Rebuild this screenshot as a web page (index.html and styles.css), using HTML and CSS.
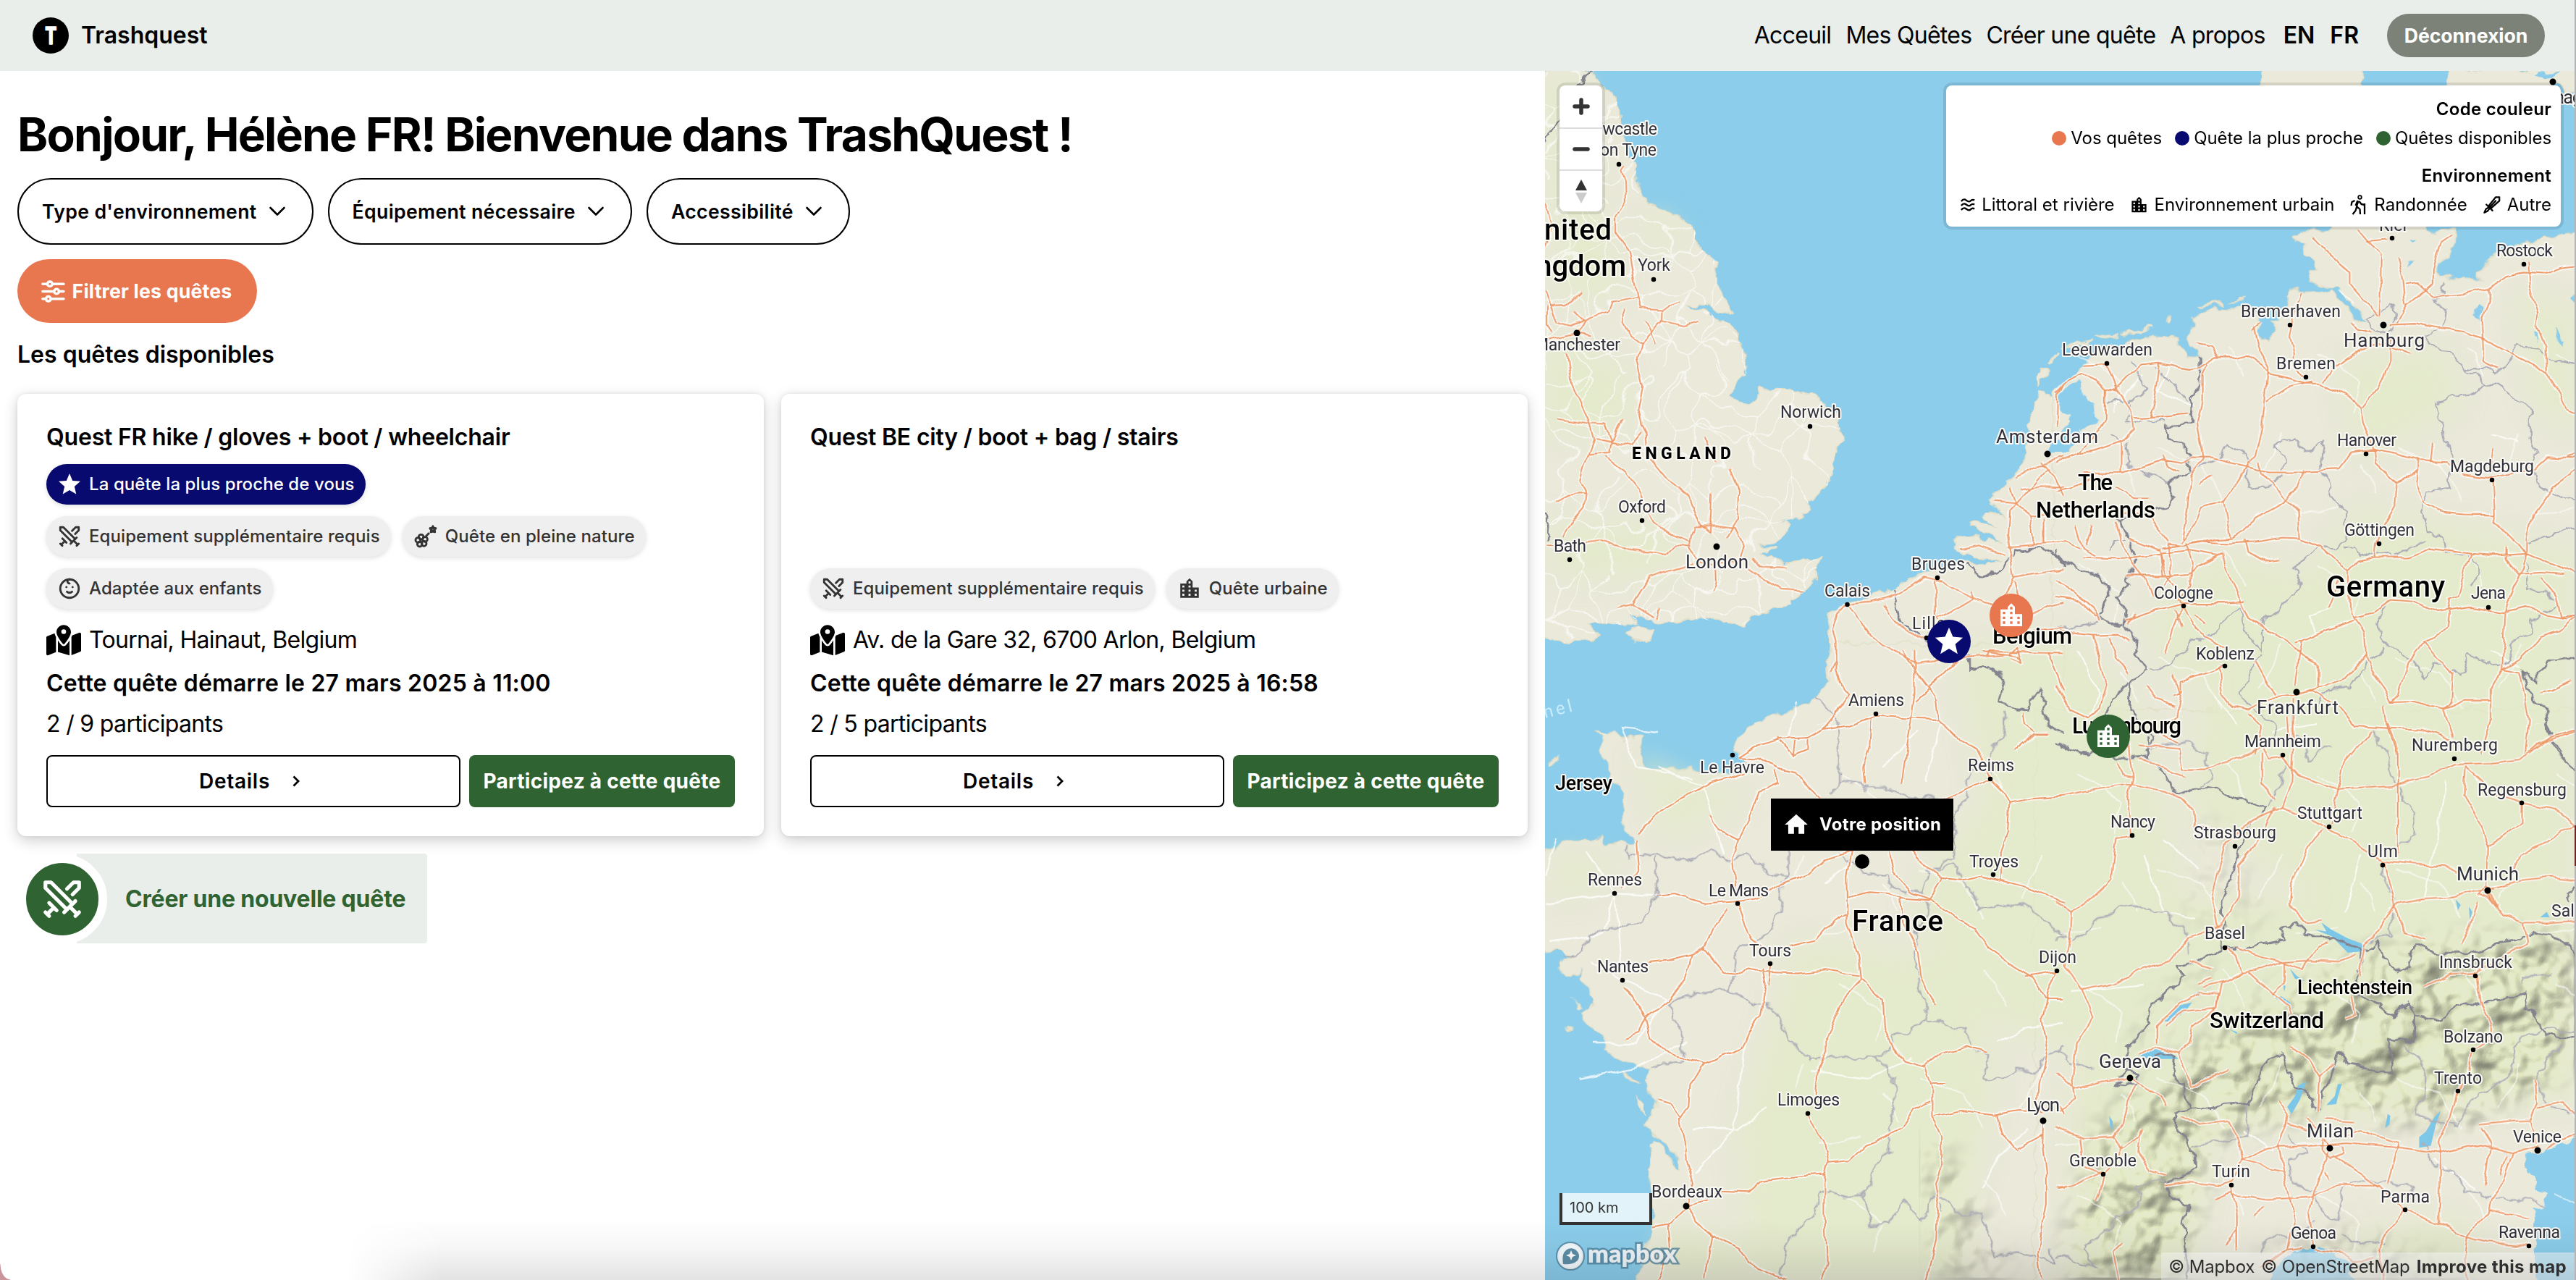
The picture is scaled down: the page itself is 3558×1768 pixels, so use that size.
FILE: index.html
```html
<!DOCTYPE html>
<html lang="fr">
<head>
<meta charset="utf-8">
<title>Trashquest</title>
<link rel="stylesheet" href="styles.css">
</head>
<body>
<svg class="sprite" aria-hidden="true">
  <symbol id="i-swords" viewBox="0 0 24 24"><g class="line"><path d="M14.5 17.5L3 6V3h3l11.5 11.5M13 19l6-6M16 16l4 4M19 21l2-2M14.5 6.5L18 3h3v3l-3.500 3.500M5 14l4 4M7 17l-3 3M3 19l2 2"/></g></symbol>
  <symbol id="i-sword" viewBox="0 0 24 24"><g class="line"><path d="M21.500 2.500h-4.500L9 12.500l3 3L21.500 7zM17 7l-6.500 7M5.500 11.500l7.500 7.500M7.500 15.500l-2.500 1.500-2 4.500 4-2 2-2.500"/></g></symbol>
  <symbol id="i-waves" viewBox="0 0 24 24"><g fill="none" stroke="currentColor" stroke-width="2.600"><path d="M2 6.500c3-3.500 5-3.500 7.500-1.500s5 2.500 6.500 1 3.500-2.500 6-1M2 13c3-3.500 5-3.500 7.500-1.500s5 2.500 6.500 1 3.500-2.500 6-1M2 19.500c3-3.500 5-3.500 7.500-1.500s5 2.500 6.500 1 3.500-2.500 6-1"/></g></symbol>
  <symbol id="i-city" viewBox="0 0 24 24"><path d="M15 11V5l-3-3-3 3v2H3v14h18V11h-6zm-8 8H5v-2h2v2zm0-4H5v-2h2v2zm0-4H5V9h2v2zm6 8h-2v-2h2v2zm0-4h-2v-2h2v2zm0-4h-2V9h2v2zm0-4h-2V5h2v2zm6 12h-2v-2h2v2zm0-4h-2v-2h2v2z"/></symbol>
  <symbol id="i-hike" viewBox="0 0 24 28"><circle cx="14" cy="3.500" r="2.300" fill="none" stroke="currentColor" stroke-width="1.800"/><path fill="none" stroke="currentColor" stroke-width="2.300" stroke-linejoin="round" d="M7 8l-4 2-1 5M12 8.500L9.500 16l4.500 4 .5 7M9.500 17L8 22l-4 5M13 9l3 4 5 1M11 8L8 15M20.500 12v15"/></symbol>
  <symbol id="i-flower" viewBox="0 0 24 24"><g class="line"><circle cx="7.500" cy="12.500" r="2.400"/><circle cx="4.500" cy="15.500" r="2.400"/><circle cx="6.200" cy="19.500" r="2.400"/><circle cx="10.300" cy="19" r="2.400"/><circle cx="11.300" cy="14.800" r="2.400"/><path d="M12.500 11.500L15 9"/><circle cx="19" cy="5" r=".6"/><path d="M19 2l.9 1.700 2 .3-1.200 1.600.3 2.100-2-.6-2 .6.3-2.100L16.100 4l2-.3z"/></g></symbol>
  <symbol id="i-kid" viewBox="0 0 24 24"><g class="line"><circle cx="12" cy="12" r="9"/><path d="M9 10.500h.01M15 10.500h.01M9.500 15a3.500 3.500 0 0 0 5 0M12 3a2 2 0 0 0 0 4"/></g></symbol>
  <symbol id="i-star" viewBox="0 0 24 24"><path d="M12 17.270L18.180 21l-1.640-7.030L22 9.240l-7.190-.61L12 2 9.190 8.630 2 9.240l5.460 4.730L5.820 21z"/></symbol>
  <symbol id="i-home" viewBox="0 0 24 24"><path d="M10 20v-6h4v6h5v-8h3L12 3 2 12h3v8z"/></symbol>
  <symbol id="i-place" viewBox="0 0 576 512"><path d="M408 120c0 54.600-73.100 151.900-105.200 192c-7.700 9.600-22 9.600-29.600 0C241.100 271.900 168 174.600 168 120C168 53.700 221.700 0 288 0s120 53.700 120 120zm8 80.400c3.500-6.900 6.700-13.800 9.600-20.600c.5-1.200 1-2.500 1.500-3.700l116-46.400C558.900 123.400 576 135 576 152V422.800c0 9.800-6 18.600-15.100 22.300L416 503V200.400zM137.600 138.300c2.400 14.100 7.200 28.300 12.800 41.500c2.900 6.800 6.100 13.700 9.600 20.600V451.800L32.900 502.700C17.100 509 0 497.400 0 480.400V209.600c0-9.800 6-18.600 15.100-22.300l122.600-49zM327.800 332c13.900-17.400 35.700-45.700 56.200-77V504.300L192 449.400V255c20.500 31.300 42.300 59.600 56.200 77c20.500 25.600 59.100 25.600 79.600 0zM288 152a40 40 0 1 0 0-80 40 40 0 1 0 0 80z"/></symbol>
  <symbol id="i-sliders" viewBox="0 0 32 32"><g fill="none" stroke="currentColor" stroke-width="3.400" stroke-linecap="round"><path d="M1.800 6h5.500M15.500 6h14.500M1.800 16h14.500M24.500 16h5.500M1.800 26h3.500M13.500 26h16.500"/><circle cx="11.500" cy="6" r="3.200"/><circle cx="20.500" cy="16" r="3.200"/><circle cx="9.500" cy="26" r="3.200"/></g></symbol>
  <symbol id="i-down" viewBox="0 0 32 32"><path d="M6.500 11l9.500 9.500L25.500 11" fill="none" stroke="currentColor" stroke-width="2.600" stroke-linecap="round" stroke-linejoin="round"/></symbol>
  <symbol id="i-right" viewBox="0 0 32 32"><path d="M12.500 9.500L19 16l-6.500 6.500" fill="none" stroke="currentColor" stroke-width="2.800"/></symbol>
</svg>

<header class="topbar">
  <a class="brand"><span class="brand-mark"><svg width="50" height="50" viewBox="0 0 50 50"><text x="17.200" y="36.500" textLength="16" lengthAdjust="spacingAndGlyphs">T</text></svg></span>Trashquest</a>
  <nav class="nav">
    <a>Acceuil</a><a>Mes Quêtes</a><a>Créer une quête</a><a>A propos</a>
    <span class="langs"><b>EN</b><b>FR</b></span>
    <button class="logout">Déconnexion</button>
  </nav>
</header>

<main class="layout">
  <section class="panel">
    <h1>Bonjour, Hélène FR! Bienvenue dans TrashQuest !</h1>
    <div class="filters">
      <button class="pill">Type d'environnement<svg><use href="#i-down"/></svg></button>
      <button class="pill">Équipement nécessaire<svg><use href="#i-down"/></svg></button>
      <button class="pill">Accessibilité<svg><use href="#i-down"/></svg></button>
    </div>
    <button class="apply"><svg><use href="#i-sliders"/></svg>Filtrer les quêtes</button>
    <h2>Les quêtes disponibles</h2>
    <div class="cards">
      <article class="card">
        <h3>Quest FR hike / gloves + boot / wheelchair</h3>
        <div class="chips">
          <div class="chip-row"><span class="chip nearest"><svg><use href="#i-star"/></svg>La quête la plus proche de vous</span></div>
          <div class="chip-row"><span class="chip"><svg><use href="#i-swords"/></svg>Equipement supplémentaire requis</span><span class="chip"><svg><use href="#i-flower"/></svg>Quête en pleine nature</span></div>
          <div class="chip-row"><span class="chip"><svg><use href="#i-kid"/></svg>Adaptée aux enfants</span></div>
        </div>
        <p class="place"><svg><use href="#i-place"/></svg>Tournai, Hainaut, Belgium</p>
        <p class="date">Cette quête démarre le 27 mars 2025 à 11:00</p>
        <p class="people">2 / 9 participants</p>
        <div class="actions"><button class="details">Details<svg><use href="#i-right"/></svg></button><button class="join">Participez à cette quête</button></div>
      </article>
      <article class="card">
        <h3 class="alt">Quest BE city / boot + bag / stairs</h3>
        <div class="chips">
          <div class="chip-row"><span class="chip"><svg><use href="#i-swords"/></svg>Equipement supplémentaire requis</span><span class="chip"><svg><use href="#i-city"/></svg>Quête urbaine</span></div>
        </div>
        <p class="place"><svg><use href="#i-place"/></svg>Av. de la Gare 32, 6700 Arlon, Belgium</p>
        <p class="date">Cette quête démarre le 27 mars 2025 à 16:58</p>
        <p class="people">2 / 5 participants</p>
        <div class="actions"><button class="details">Details<svg><use href="#i-right"/></svg></button><button class="join">Participez à cette quête</button></div>
      </article>
    </div>
    <a class="create"><span class="create-icon"><svg><use href="#i-swords"/></svg></span>Créer une nouvelle quête</a>
  </section>

  <section class="map">
    <svg class="canvas" viewBox="2134 98 1424 1670" preserveAspectRatio="none">
      <defs>
        <filter id="wobble" filterUnits="userSpaceOnUse" x="2134" y="98" width="1424" height="1670" color-interpolation-filters="sRGB"><feTurbulence type="fractalNoise" baseFrequency="0.045" numOctaves="3" seed="4"/><feDisplacementMap in="SourceGraphic" scale="17" xChannelSelector="R" yChannelSelector="G"/></filter>
        <filter id="wobble-soft" filterUnits="userSpaceOnUse" x="2134" y="98" width="1424" height="1670" color-interpolation-filters="sRGB"><feTurbulence type="fractalNoise" baseFrequency="0.035" numOctaves="2" seed="9"/><feDisplacementMap in="SourceGraphic" scale="10" xChannelSelector="R" yChannelSelector="G"/></filter>
        <filter id="wobble-mesh" filterUnits="userSpaceOnUse" x="2134" y="98" width="1424" height="1670" color-interpolation-filters="sRGB"><feTurbulence type="fractalNoise" baseFrequency="0.011" numOctaves="3" seed="21"/><feDisplacementMap in="SourceGraphic" scale="110" xChannelSelector="R" yChannelSelector="G"/></filter>
        <filter id="relief" filterUnits="userSpaceOnUse" x="2650" y="1050" width="908" height="718" color-interpolation-filters="sRGB"><feTurbulence type="fractalNoise" baseFrequency="0.017" numOctaves="3" seed="7"/><feColorMatrix values="0 0 0 0 0  0 0 0 0 0  0 0 0 0 0  1 0 0 0 0"/><feGaussianBlur stdDeviation="1.500"/><feDiffuseLighting surfaceScale="26" diffuseConstant="1.180" lighting-color="#fbfbe6"><feDistantLight azimuth="225" elevation="58"/></feDiffuseLighting></filter>
        <filter id="soft" x="-20%" y="-20%" width="140%" height="140%"><feGaussianBlur stdDeviation="18"/></filter>
        <mask id="alps" maskUnits="userSpaceOnUse" x="2600" y="1000" width="958" height="768"><g filter="url(#soft)" fill="#fff"><path d="M3558 1290L3400 1300 3290 1310 3220 1340 3150 1370 3090 1410 3040 1440 2990 1500 2950 1510 2900 1560 2880 1640 2860 1700 2860 1768H3010L3030 1690 3040 1640 3050 1580 3110 1560 3160 1540 3210 1535 3290 1545 3350 1550 3400 1560 3440 1530 3500 1500 3558 1470Z"/><path opacity=".5" d="M3050 1130L3030 1280 3060 1270 3080 1160ZM3100 1180L3120 1280 3090 1290ZM2940 1440L3040 1320 3060 1340 2960 1460ZM2640 1560L2700 1600 2780 1768 2680 1768ZM3100 1740L3250 1690 3420 1768H3250Z"/></g></mask>
        <pattern id="mesh" width="150" height="130" patternUnits="userSpaceOnUse"><path d="M0 20L40 35 75 10 110 40 150 20M40 35L30 80 0 95M30 80L70 100 110 80 150 95M110 40L110 80M75 10L80 0M70 100L80 130M75 10L70 60 30 80M70 60L110 80M0 60L30 80M150 60L110 80M20 130L30 80M130 130L110 80M110 40L125 0" fill="none" stroke="#fff" stroke-width="2.300"/></pattern>
        <pattern id="mesh-wide" width="330" height="290" patternUnits="userSpaceOnUse"><path d="M10 40L40 52 70 60 88 86 100 110M180 20L170 50 150 80M200 130L235 128 260 120M100 180L118 200 130 230M230 200L262 216 290 240 280 280M290 60L304 78 310 100" fill="none" stroke="#fff" stroke-width="2.200"/></pattern>
        <clipPath id="gb"><use href="#uk-path"/></clipPath>
        <g id="uk-shape"><path id="uk-path" transform="translate(2130 90) scale(.4592 .5357)" d="M9 14H150L160 35 190 62 218 75 232 110 234 150 250 195 265 215 262 235 282 260 283 290 300 330 318 358 345 365 385 378 420 397 450 412 465 440 480 475 505 495 530 505 512 518 518 550 545 600 574 643 535 635 495 615 470 625 428 620 450 632 495 632 530 655 565 680 585 695 610 740 618 775 615 795 590 815 560 853 590 865 620 878 640 865 645 845 655 835 700 835 760 838 820 855 860 880 890 905 895 940 898 970 880 1000 872 1040 862 1080 830 1110 800 1120 800 1135 793 1158 760 1165 715 1180 738 1185 735 1210 700 1230 650 1240 700 1245 663 1258 705 1270 730 1285 780 1275 834 1273 825 1300 828 1325 790 1355 742 1380 740 1395 700 1400 670 1410 630 1420 610 1445 550 1435 490 1430 430 1428 370 1440 330 1435 290 1415 275 1410 290 1440 250 1445 200 1440 140 1438 165 1470 150 1487 100 1475 65 1490 40 1478 -30 1465V14Z"/></g>
        <g id="c5-roads" transform="translate(2130 90) scale(.4592 .5357)">
          <path d="M9 355L30 420 9 470M248 262L238 275 248 300 250 352 222 395 222 430 262 480 280 560 288 595 298 628 358 632 380 618 418 607M9 583L25 622 70 620 115 585M25 622L45 662 90 672 140 650 200 635 210 610 288 597M9 708L60 700 104 690 125 660 95 635M75 745L90 825 115 870 140 918 155 965 140 1000 115 1070 130 1100 125 1140 95 1170 60 1215M104 690L148 697M15 622L15 665 30 690M245 628L245 665 265 695 297 715 325 690 357 660 358 632M310 662L340 717M357 660L430 672 468 660M297 715L285 760 305 830 290 890 300 930 315 955 318 1005 370 1060 440 1110 470 1180 505 1205M45 912L140 925 190 927 210 970 160 962M210 970L240 915M210 970L270 982 300 950M210 970L205 1000 140 1005M190 1010L250 1050 290 1095 310 1140 330 1180 385 1210 450 1232M42 1125L80 1108 128 1105M9 1240L60 1240 140 1228 175 1225 260 1250 350 1258 375 1262 400 1240 450 1245M487 957L520 1020M563 1040L592 1100 590 1170 555 1218M510 1100L505 1205M460 1190L530 1190 580 1195 605 1235 590 1280 520 1290 470 1280 445 1250 450 1215 460 1190M450 1285L390 1300 320 1320 270 1390 335 1425M235 1400L270 1390M350 1400L345 1430M520 1285L522 1330 510 1355M610 1290L660 1320 720 1350 780 1353M635 1270L660 1295 735 1297M870 1568L885 1535 885 1480 875 1450 890 1415 918 1390 985 1385 1050 1370 1110 1345 1150 1320 1200 1330 1250 1355 1330 1385 1370 1395 1420 1320 1400 1210 1405 1150 1470 1090 1520 1040M925 1395L975 1460 1020 1495 1090 1525 1125 1540M1180 1330L1182 1420 1225 1480M1030 1390L1060 1430 1125 1470 1160 1480M1400 1240L1480 1235 1568 1230M1420 1320L1480 1310 1568 1298M1190 1425L1260 1395 1300 1375 1290 1355M1260 1250L1310 1240 1390 1262M1425 1065L1480 1035 1568 1010M1410 1090L1425 1130 1470 1160 1568 1160M1360 1125L1425 1130M1420 1330L1440 1400 1450 1460 1568 1450M1470 1420L1520 1395 1568 1385M1125 1540L1250 1530 1400 1520 1425 1500 1440 1540 1410 1530M1330 1525L1340 1510 1568 1515M1440 1095L1500 1085 1568 1088M1500 1020L1540 1060 1568 1110M1470 1160L1480 1235M1510 1170L1510 1235M1548 930L1550 850 1568 830"/>
        </g>
        <g id="c6-roads" transform="translate(2840 300) scale(.4579 .4719)">
          <path d="M0 515L40 478 80 460 120 478 150 510 180 500 215 465 260 435 310 430 400 445 430 440 480 410 540 410 580 402 620 430 650 460 700 472 753 485 800 485 850 510 900 535 920 555 925 600 960 680 1010 690 1090 710 1180 715 1230 755 1300 765 1400 745 1440 735 1480 700 1568 705M82 432L152 428 180 500 225 560 235 620 200 655 110 685 60 690M150 510L150 590 110 650 60 690 0 720M310 430L300 500 285 570 290 587 400 578M235 590L290 587M425 370L470 380 490 410M455 430L440 460 440 540 425 600 445 710 405 760 395 860 380 940M595 320L600 340 610 380 640 440 630 530 620 620 600 700 580 720 505 830 525 940M620 305L590 330M735 220L720 270 705 350 718 400 715 440 750 470M775 480L700 495 635 540M870 420L830 450 810 480M870 420L920 385 990 370 1070 400M775 60L830 115 885 160 885 195 970 290M910 35L940 70 980 108 978 200 975 290M935 70L1000 65M1190 50L1160 70 1135 150 1135 195 1060 255 1030 310M1055 200L1090 195 1140 235 1230 225 1300 210 1360 170 1410 160 1480 165 1520 150 1568 145M1030 115L1045 180 1055 255M1010 315L1080 312 1150 325 1230 335 1290 355 1370 395 1440 430 1480 460 1520 520 1540 560 1568 572M1300 210L1305 250 1285 300 1290 380 1290 420 1330 440M1424 130L1430 200 1455 280 1450 320 1475 380 1478 460M1005 350L1005 420 970 500 925 555M890 305L910 330 950 340M80 750L200 750 320 710 380 720 410 705 470 705 530 720 580 730 640 745 700 745 760 745 850 740 890 690 965 680M195 660L195 750M320 700L340 730 370 745M610 715L620 750 680 810 730 860 735 940M750 740L730 790 690 830 600 880 570 920 530 940 470 945 380 960 340 955M505 830L440 850 420 900 375 950M320 970L430 950 520 955 600 950 680 938 735 940 800 965 840 1000 880 1035 910 1005 960 995 1060 995 1130 970 1250 985 1330 990 1420 985 1480 1010 1568 1045M960 680L965 720 1025 775 1020 850 990 900 965 960 962 995M1025 775L1090 745 1090 705M1135 665L1130 710M1315 680L1310 730M1320 770L1325 870 1320 890 1370 940 1420 985M1090 740L1085 780 1110 835 1170 865 1230 870 1325 872M1568 740L1500 790 1440 870 1420 940 1420 985 1410 1030 1380 1080 1355 1150 1350 1250 1345 1320 1310 1380 1310 1470 1280 1568M1568 690L1540 700M1355 970L1355 1000 1395 1045 1460 1040 1530 1045M1460 1055L1510 1110 1525 1170 1568 1165M1250 985L1230 1040 1210 1110 1180 1120 1190 1160 1185 1200 1110 1240 1060 1300 1030 1400 1010 1420M900 1170L960 1155 1010 1120 1080 1125 1150 1155 1250 1140 1350 1155 1420 1140 1480 1165 1540 1175 1568 1165M880 1035L880 1110 900 1170 930 1220 935 1290 960 1340 990 1380 1010 1420 1080 1418 1170 1440 1230 1415 1310 1415M850 1060L835 1110 820 1145M570 945L580 980 630 1008 675 1003M500 985L510 1030 550 1110 580 1170 640 1210 700 1245 740 1285 790 1310 790 1380 760 1390M900 1180L820 1205 740 1240 720 1245M740 1240L730 1290 720 1370M935 1280L870 1350 790 1380M0 1060L60 1100 110 1140 130 1180M220 940L310 975 330 1050 370 1110 384 1138M340 955L345 1050 320 1080M310 970L320 1050M390 950L410 1010 405 1080 370 1120M500 985L430 1020 400 1045 330 1050 210 1050M80 995L200 1000 310 985 400 975 490 990M180 890L195 950 230 1010 270 1060 290 1110M210 1180L300 1150 384 1130 500 1130 570 1125M384 1140L420 1200 450 1230 510 1260M384 1140L350 1200 330 1280M420 1160L450 1190M355 1150L375 1200M240 1160L215 1190M0 1210L110 1222 190 1220 220 1240M110 1222L130 1290 150 1370 130 1440 95 1465M160 1230L180 1290 220 1340M510 1315L430 1345 370 1360 370 1390 350 1400M490 1325L500 1390 530 1430 580 1440M350 1340L375 1420 370 1460 330 1480 310 1510 370 1540M270 1370L300 1410 360 1430M580 1440L640 1410 726 1400 770 1385M600 1300L640 1370 660 1400M715 1410L715 1568M700 1460L705 1530M770 1385L850 1430 900 1490 990 1495 1100 1500 1200 1530M990 1430L1000 1495 1025 1568M1110 1240L1160 1300 1195 1340 1190 1420 1170 1440 1200 1520M0 800L50 790 110 760M0 1110L70 1120 120 1170M60 900L80 970 120 990M20 950L70 970M110 900L90 960M580 1450L620 1490 600 1568M1345 1320L1395 1330 1410 1390 1425 1470 1415 1568M1345 1320L1400 1290 1460 1230 1520 1210 1568 1170M0 1370L40 1440 95 1465M180 790L240 825 280 825M200 860L290 880 340 950M470 755L430 780M1430 1568L1500 1520 1568 1500M1460 1390L1500 1380 1550 1357"/>
        </g>
        <g id="c7-roads" transform="translate(2130 900) scale(.4592 .5536)">
          <path d="M885 0L885 50 905 95 920 110 870 170 845 195 800 215 720 218 640 235 590 262M845 195L920 185 1005 160 1100 165 1190 168 1240 210 1310 245 1348 315 1390 350 1405 375 1400 450 1380 500 1378 570M1085 0L1125 50 1180 110 1190 168M1250 20L1190 70 1125 120M1120 0L1120 100 1110 170 1095 250 1080 330M990 165L985 230 965 290 970 330M1348 318L1290 340 1215 365 1130 385M1405 375L1480 365 1568 360M590 262L650 265 710 290 760 300 790 330 835 365M710 215L755 260 800 245M760 220L755 260M800 220L800 245M700 295L710 330 650 350 620 420 590 470 570 520 580 590M470 345L500 330 570 315 620 300M470 345L410 370 370 390 310 430 290 460M505 410L530 445 590 470M283 475L290 550 240 590M350 610L400 605 490 628 580 622 640 615 720 580 800 555 850 520 930 498M589 628L610 680 630 715 660 735M560 640L520 680 490 740 450 755 380 770 320 775M450 755L430 820 380 870 310 915 290 950 250 962M490 740L550 800 600 805 620 790 687 800 770 803 850 795 955 808M660 790L670 830 655 910 620 950 600 990 540 1010 490 1030 440 1015 380 1005 325 965 310 915 275 860 250 840M687 778L680 830M750 735L820 720 850 690 920 655M930 498L915 560 918 680 950 750 960 815 910 860 890 900 850 970 850 1000 830 1040 820 1120M1045 500L1055 550 1110 600 1170 620 1240 665 1300 690 1340 740 1400 775 1470 810 1515 865 1568 865M920 615L980 602 1040 605 1090 615 1160 620 1200 565 1260 570 1320 560 1378 572 1460 590 1568 625M1105 490L1150 535 1200 565M1080 610L1085 680 1130 750 1140 810 1160 850 1185 880M960 815L1025 870 1030 940 1060 990 1090 1020 1150 1035 1170 1090 1170 1160 1200 1210 1200 1280 1180 1330 1190 1370 1185 1470 1155 1568M1145 1035L1200 1000 1280 985 1340 1000M1170 1080L1215 1080M800 1152L825 1195 850 1230 862 1275 850 1310 850 1400 855 1530 840 1568M862 1275L920 1270 970 1230 1030 1210 1085 1185 1120 1140 1165 1120M1175 1160L1260 1145 1360 1155 1440 1145 1507 1150M1365 1155L1380 1200 1430 1245M1430 1240L1507 1205M540 1345L620 1348 660 1320 760 1310 850 1305M490 1030L445 1080 440 1130 415 1165 430 1220 435 1270 455 1330 434 1384M350 1120L390 1130 420 1165M434 1384L380 1430 330 1437M434 1384L460 1420 510 1455 590 1490 620 1525 730 1568M380 1430L385 1490 350 1568M510 1455L500 1510 490 1568M434 1384L500 1372M1548 796L1520 850 1505 920 1520 990 1495 1080 1490 1140M1507 1171L1505 1230 1515 1300 1515 1380 1500 1440 1490 1500 1500 1568M1320 0L1420 10 1440 20M1420 250L1480 205 1520 205M1480 200L1450 180 1445 150M1568 100L1545 50 1520 0M1450 810L1548 796M1568 1150L1540 1120M1550 1340L1568 1338"/>
        </g>
        <g id="c8-roads" transform="translate(2840 1000) scale(.4579 .4898)">
          <path d="M0 205L110 185 225 170 330 190 380 210 410 240 415 290 490 300 510 295M215 0L220 80 230 150 215 210 225 314 180 320 165 440 110 490 45 530 0 500M180 110L200 145 230 150M45 530L40 620 25 680 75 750 110 825 60 900 50 1000 60 1060 0 1090M75 750L180 730 260 690 340 670 400 600 470 580 500 570M245 60L370 70 380 130 450 130 500 110 560 95 620 60M250 90L340 135 390 150M610 40L640 100 684 95 730 145 850 185 1010 175 1120 150 1202 115 1310 110 1400 100 1450 60 1568 20M620 80L620 170 660 210M715 80L710 160 680 235 600 270 510 330 470 480 490 580M660 235L600 340 550 400 550 480 500 570M680 235L760 260 820 300 910 340 985 385 1080 395 1170 400 1240 430M850 185L830 280M850 185L870 110 950 20M1000 0L1030 80 1030 180 1030 370M800 300L760 350 710 450 705 510 760 560 800 555M990 390L1020 510 1100 495 1180 490 1260 470 1301 469M1020 510L1050 590 1115 610M1020 510L960 600 930 620 915 710M1235 120L1230 200 1280 280 1305 350 1301 469 1340 460 1400 440 1490 432 1568 440M1235 120L1330 200 1405 223 1405 280 1305 345M1405 223L1500 240 1568 290M1568 280L1480 330 1400 370 1370 430M1301 480L1350 540 1410 560 1490 560 1568 555M1270 500L1250 570 1220 620M1310 480L1330 510 1301 490 1270 480 1301 455 1325 470M1410 560L1420 620 1340 660 1270 700 1190 705 1110 740M1270 710L1280 780 1310 850 1310 890 1258 919 1245 990 1212 1035 1190 1110 1150 1180 1160 1210M508 631L545 650 560 700 620 690 680 670 740 690 790 630 820 620M545 630L600 650 680 670 760 665 850 670 900 650M560 700L500 730 485 800 380 810 330 850M580 700L650 760 700 800 710 820M690 670L690 730 650 765M445 740L510 725M400 670L470 690M430 730L470 715M485 800L490 760 430 755M485 800L410 860 400 900 365 930 300 910 250 935M305 900L305 850 370 790 430 760M365 930L385 980 410 1025 440 1005 520 975M710 910L760 945 795 995 790 1090M795 995L840 955M870 830L900 820 890 770M222 998L140 1010 100 1020 60 1030 0 980M222 998L280 1030 320 1050 335 1075M240 1020L215 1060 200 1130 170 1165 80 1170 0 1140M170 1165L195 1200 250 1165 260 1145M142 1270L195 1220 195 1190M142 1270L80 1240 70 1170M250 1170L245 1210 280 1255 330 1270M142 1270L130 1320 120 1340M0 1310L50 1300 140 1260M330 1300L400 1290 500 1300 530 1290 560 1230 640 1195 760 1190 826 1185M380 1105L430 1130 520 1120 550 1170 560 1230 640 1250 690 1260M530 1310L545 1380 545 1480M530 1320L480 1340M530 1325L640 1340 760 1335 850 1300 970 1300 1050 1370 1160 1410 1240 1445 1300 1460 1430 1470M670 1060L700 1100 695 1140 670 1190 690 1280 720 1400 700 1480M750 1110L790 1150 826 1185 870 1180 1000 1190 1160 1210 1280 1185 1380 1210 1453 1190M840 1220L970 1305M826 1200L780 1310 760 1380 775 1470M700 1130L760 1150M870 1160L920 1145 1030 1180 1000 1300M1160 1210L1155 1410M1280 1140L1310 1185 1300 1260 1290 1300M1275 1130L1380 1120 1430 1118M1445 1000L1450 1070 1430 1118M1450 1085L1530 1070 1568 1110M1430 1120L1445 1180M1380 1210L1350 1290 1310 1340 1300 1380 1240 1445 1230 1510 1240 1568M1360 1220L1340 1270M1305 1370L1430 1395M1053 1370L1000 1430 970 1480 985 1568M600 1390L630 1360M545 1430L510 1470M780 1480L850 1490 900 1520 960 1500M640 1520L700 1480 740 1475M200 1465L175 1490 190 1568M860 1190L870 1210 830 1225 800 1200 805 1170M810 1260L820 1280M1480 1200L1568 1150M700 1480L610 1530M810 1115L900 1120"/>
        </g>
      </defs>
      <rect x="2134" y="98" width="1424" height="1670" fill="#8bcdeb"/>
      <g filter="url(#wobble)">
        <g fill="#eae9da" stroke="#e2dec8" stroke-width="1.500">
          <use href="#uk-shape"/>
          <g transform="translate(2130 90) scale(.4592 .5357)">
            <path d="M243 1468L290 1445 333 1462 320 1480 280 1490ZM1485 820L1505 780 1518 780 1515 805ZM1515 760L1550 740 1555 744 1520 765Z"/>
            <path d="M860 1590L862 1450 865 1415 895 1395 920 1385 1000 1365 1060 1350 1110 1325 1165 1305 1215 1290 1265 1278 1300 1292 1385 1278 1300 1268 1240 1245 1235 1228 1265 1220 1310 1215 1345 1228 1385 1240 1340 1205 1285 1190 1290 1178 1340 1180 1375 1195 1320 1160 1345 1150 1390 1170 1350 1128 1338 1120 1370 1105 1410 1070 1440 1025 1465 960 1470 900 1485 840 1510 855 1540 860 1568 835V1590Z"/>
          </g>
          <g transform="translate(2840 300) scale(.4579 .4719)">
            <path d="M-10 1590V520L40 480 70 460 80 430 110 400 170 380 250 360 300 350 360 348 365 370 380 390 400 410 435 412 435 400 408 385 395 355 400 325 415 320 410 300 430 285 490 270 555 265 600 280 620 310 605 335 620 360 645 360 655 320 650 300 690 290 700 240 705 215 725 208 745 225 780 225 830 212 880 262 900 300 940 310 890 245 855 208 800 200 760 190 765 155 785 150 775 125 750 110 755 75 715 70 712 55 735 38 830 30V0H1110L1115 40 1150 45 1205 30 1200 105 1145 140 1150 165 1210 180 1240 175 1280 190 1265 165 1290 140 1340 95 1400 75 1470 60 1520 45 1590 35V1590ZM10 385L60 365 110 357V363L60 375ZM120 350L190 342V348L125 356ZM200 343L290 320 292 326 205 350ZM325 300L345 296 335 308ZM425 262L500 250 505 255 430 266ZM520 245L575 240 570 246Z"/>
          </g>
          <g transform="translate(2130 900) scale(.4592 .5536)">
            <path d="M860 -20L862 55 870 72 840 105 780 130 700 160 640 180 590 210 575 245 600 265 610 290 570 305 480 300 400 290 330 290 300 265 295 245 303 215 290 208 240 220 220 210 165 203 185 220 180 255 205 300 235 345 245 380 240 430 265 455 270 480 230 475 190 478 185 462 150 470 110 475 75 475 40 490 -9 500V748L55 745 90 760 55 775 50 790 80 810 120 800 130 835 155 870 125 900 140 930 185 960 195 995 240 1020 280 1035 330 1040 310 1070 325 1095 345 1120 335 1150 305 1185 345 1205 400 1250 412 1290 400 1290 385 1260 340 1220 325 1230 320 1330 330 1400 330 1440 310 1480 285 1590H1568V-20ZM22 270L50 258 45 270 25 277ZM245 1055L290 1070 292 1076 250 1062ZM275 1108L300 1120 312 1160 285 1130ZM95 870L120 885 105 890ZM76 940L92 942 84 948Z"/>
          </g>
          <path d="M2810 980H3590V1790H2810ZM3127 90H3262V140H3120ZM3385 90L3420 100 3450 92 3480 100 3500 90H3570V128H3545L3530 112 3510 125H3380Z"/>
        </g>
      </g>
      <g fill="#e2eac6" opacity=".7" filter="url(#soft)">
        <path d="M2134 110H2190L2210 300 2240 400 2160 420ZM2270 290L2310 305 2325 325 2280 340ZM2134 470L2240 500 2260 580 2180 600 2134 600ZM2140 720L2300 730 2320 790 2160 800ZM3230 500L3380 480 3400 560 3260 640ZM3060 760L3220 800 3250 960 3000 940 2960 860ZM3260 700L3558 760V1240L3220 1260 3020 1120 3040 960ZM2700 900L2860 880 2960 980 3020 1240 2900 1460 2700 1400 2640 1240 2740 1100ZM2480 1300L2700 1320 2760 1480 2700 1768H2420L2400 1560ZM2150 1180L2240 1190 2180 1240 2150 1240ZM2260 1040L2340 1080 2420 1100 2300 1160ZM2300 1690L2420 1720 2400 1768H2290ZM3220 1720L3400 1680 3440 1768ZM3480 400L3558 430V600L3500 560ZM3000 1240L3558 1240V1520L3300 1540 3060 1560 3020 1768H2860V1480Z"/>
      </g>
      <g filter="url(#wobble)">
        <g fill="#8bcdeb">
          <path transform="translate(2840 1000) scale(.4579 .4898)" d="M630 1590L680 1520 730 1482 780 1474 830 1487 880 1530 910 1590ZM1600 1150L1480 1200 1420 1215 1410 1240 1425 1270 1445 1280 1450 1310 1490 1330 1470 1365 1435 1375 1438 1420 1440 1470 1450 1520 1460 1590H1600Z"/>
          <path transform="translate(2840 300) scale(.4579 .4719)" d="M5 515L75 470 80 520 110 545 115 600 75 625 40 600 45 575 10 565ZM-15 665L60 595 75 640 30 690 -15 690ZM1275 250L1285 260 1280 310 1270 290ZM1055 120L1075 125 1065 138ZM1500 330L1535 360 1530 375 1505 350ZM1445 330L1452 340 1440 360ZM1568 210L1550 230 1568 245ZM1065 65L1085 68 1075 75Z"/>
          <path d="M3535 200H3558V300H3540ZM3505 98L3535 100 3530 106 3500 104ZM3540 130L3558 140V200H3538Z"/>
        </g>
      </g>
      <g class="relief" mask="url(#alps)"><rect x="2650" y="1050" width="908" height="718" filter="url(#relief)"/></g>
      <g clip-path="url(#gb)" opacity=".6"><rect x="2060" y="30" width="560" height="900" fill="url(#mesh)" filter="url(#wobble-mesh)"/></g>
      <g class="minor" filter="url(#wobble-soft)">
        <path d="M2134 1248L2230 1234 2330 1240M2230 1234L2215 1290 2140 1300M2230 1234L2190 1175M2230 1234L2240 1340M2290 1010L2240 1005 2260 1060 2340 1075M2350 1085L2380 1180M2350 1085L2290 1060M2241 1354L2200 1330M2241 1354L2300 1380 2260 1440 2200 1440M2410 1440L2395 1560 2340 1620M2180 1490L2260 1475 2330 1440M2500 1480L2580 1490 2640 1460M2340 1560L2400 1560 2440 1530M2470 1020L2480 970M2680 1000L2660 1080M2600 1060L2650 1010M2760 1440L2800 1420 2850 1415M2800 1560L2760 1600 2740 1640M2960 1180L2990 1260 3030 1270M2990 1160L3040 1200M3200 1150L3160 1240M3260 1180L3240 1260M3380 1080L3350 1240M2870 900L2900 960 2880 1000M3000 500L2980 540 3030 560M2920 560L2960 520M2860 1370L2960 1360M3480 920L3440 900M3100 1560L3140 1590M3360 1600L3420 1640M3060 960L3090 1000M3140 1010L3200 1000M2560 1190L2520 1220M2150 1160L2134 1210M3230 400L3250 420M3440 600L3480 610M3200 880L3190 850 3220 840"/>
        <rect x="2480" y="1000" width="1078" height="740" fill="url(#mesh-wide)" stroke="none" opacity=".7"/>
        <rect x="2860" y="480" width="698" height="500" fill="url(#mesh-wide)" stroke="none" opacity=".7"/>
      </g>
      <g class="lakes" transform="translate(2840 1000) scale(.4579 .4898)">
        <path d="M780 580L830 598 880 645 935 640 925 620 880 605 830 580 800 560 815 585ZM325 838L365 795 410 785 390 810 345 840ZM250 935L300 915 350 930 370 945 320 945 270 942ZM415 760L435 755 430 770ZM1205 495L1220 510 1212 525ZM1245 515L1255 530 1248 558ZM1460 545L1480 530 1488 545ZM660 772L680 768 705 785 712 805 690 788ZM705 690L725 710 750 725 720 718ZM697 1080L720 1050 730 1020 755 1008 735 1060 710 1100ZM815 1075L840 1050 850 1015 862 1015 850 1050 845 1072ZM992 1140L1000 1100 1008 1105 1005 1130ZM1160 1090L1145 1130 1130 1190 1095 1195 1095 1165 1115 1150 1140 1110ZM160 1105L170 1120 172 1145 163 1135ZM685 735L692 740 688 755ZM525 862L545 868 545 875Z"/>
      </g>
      <g class="region" filter="url(#wobble)">
        <path transform="translate(2840 300) scale(.4579 .4719)" d="M1170 185L1165 230 1145 240 1175 270 1170 315 1110 350 1130 385 1190 390 1230 440 1300 485 1320 490 1400 540 1430 560 1430 640 1450 680 1435 720 1450 790 1480 800 1530 820 1568 830M1230 440L1330 450 1400 380 1450 385 1500 420 1568 430M1300 485L1260 520 1200 525 1145 545 1160 600 1175 660 1195 720 1180 790 1110 800 1105 860 1120 920 1170 930 1175 975 1250 990 1280 1040 1250 1080M940 300L970 285 1020 260 1025 300 1000 340 960 335ZM400 740L440 720 490 700 515 660 560 690 580 720 575 760 590 795 640 785 685 750 685 700 655 680 720 645 750 690 810 655 790 750 820 780 840 840 875 860 870 940 840 980 790 965 750 1000 710 1030 740 1070 690 1130 620 1180 620 1270 580 1230 550 1145 500 1190 460 1230 400 1250 350 1310 280 1320M870 970L905 960 920 1000 960 990 1060 980 1110 940M1000 1130L970 1180 975 1230 1010 1260 1070 1290 1110 1350 1140 1310 1190 1320 1220 1340 1240 1280 1320 1310 1370 1300 1370 1250 1440 1220 1440 1180 1510 1130 1480 1100 1420 1090 1420 950 1568 910M940 1300L970 1290 1000 1265M935 1300L890 1380 800 1385 790 1420M620 1280L580 1340 550 1400 600 1440 660 1480 665 1540M230 420L250 470 275 500 220 540 150 545M300 440L350 480 400 540M220 545L220 600 330 600M210 660L215 730 340 780M160 640L200 660M170 970L170 950 200 940M0 1200L60 1200 130 1190"/>
        <path transform="translate(2130 900) scale(.4592 .5536)" d="M825 110L895 180 895 320 870 360M895 320L980 340 1030 340 1080 355 1180 365 1175 400M1390 150L1385 210 1350 240 1350 300 1280 290 1280 360 1240 400 1240 510 1160 545 1140 600 1050 590 1040 560 960 555 900 500M245 480L260 515 340 505 440 520 510 495 550 520 620 505 680 550 740 560 740 500M340 510L345 610 300 680 230 680 140 710 120 755 65 760M740 560L720 590 715 650 670 715 590 735 570 840 640 885 680 880 750 970 800 1020 880 1010 1000 1010 1060 1060 1060 1120 1040 1180 1050 1250 1020 1260 970 1350 930 1360 840 1345 820 1400 740 1470 720 1568M570 840L440 860 380 880 420 950 430 1020 330 1035M1160 545L1240 530 1320 640 1460 630 1520 680 1568 710M1140 600L1165 640 1120 700 1130 800 1160 920 1060 960 1060 990 1005 1010M1160 920L1270 940 1310 1000 1340 1010 1330 1060 1380 1070 1420 1045 1480 1050 1520 1000 1568 990M970 1350L985 1430 1050 1425 1090 1370 1140 1420 1170 1360 1220 1370 1270 1410 1320 1400 1360 1510 1430 1500 1480 1510 1540 1520 1530 1490M1200 1400L1180 1370"/>
        <path transform="translate(2840 1000) scale(.4579 .4898)" d="M0 600L50 610 120 560 220 505 330 530 395 590 400 650M280 75L390 45 450 80 465 150 430 180M950 20L1000 80 1015 150 1050 220 1080 250 1080 310 1040 340 1040 370M985 400L1015 500 1010 590 930 620M690 100L680 180 640 235M700 0L740 50 760 100 830 60M1500 700L1410 710 1410 740M1568 870L1480 860 1400 890 1370 990 1280 1040 1210 1130 1150 1120 1085 1100 1110 1040 1110 960 1050 910M1530 900L1450 980 1470 1060 1530 1090 1568 1100M0 920L60 960 100 980M570 1070L575 1160 420 1190M700 1160L750 1210 700 1230 710 1300 780 1320 800 1370 850 1400 870 1300 930 1290 1000 1290 1120 1330M1110 1190L1120 1220 1200 1270 1240 1320 1330 1340 1440 1340 1470 1365M860 1440L920 1470 990 1460M330 1290L240 1300 260 1350 190 1390 130 1440 80 1480 120 1530 0 1500M780 1400L740 1440 640 1450 620 1490"/>
      </g>
      <g class="country" filter="url(#wobble)">
        <path transform="translate(2130 90) scale(.4592 .5357)" d="M150 14L120 45 90 60M60 145L40 155 9 200M9 1150L20 1170 15 1220M1275 1290L1320 1320 1375 1300 1400 1275 1420 1250 1500 1245 1550 1260 1568 1295M1055 1352L1070 1420 1110 1460 1160 1480 1200 1500 1275 1520 1280 1568"/>
        <path transform="translate(2840 300) scale(.4579 .4719)" d="M435 412L437 460 410 530 405 605 335 610 335 655 380 665 405 700 395 740 335 780 355 820 320 850 190 885 215 930 235 1000 210 1060 225 1080 180 1110 210 1150 205 1200 245 1240 240 1280 270 1325 225 1370 220 1440 265 1500 290 1530 265 1568M0 970L20 1010 110 1040 165 1080 130 1180 200 1195M220 1370L170 1400 150 1460 130 1480M1568 1290L1490 1300 1450 1330 1450 1370 1410 1330 1420 1380 1480 1440 1490 1500 1520 1568"/>
        <path transform="translate(2130 900) scale(.4592 .5536)" d="M1280 0V45L1340 40 1390 70 1375 130 1460 145 1500 90 1515 180 1568 200"/>
        <path transform="translate(2840 1000) scale(.4579 .4898)" d="M0 50L80 80 200 95 265 90 300 110 350 180 400 190 480 180 540 210 630 235 580 300 550 350 530 440 505 500 500 640 430 670 370 680 390 710 290 800 280 850 210 910 215 960M270 90L270 40M520 635L600 625 690 610 680 580 720 565 760 600 840 600 890 630 940 640 960 620 1010 680 1030 705 1060 690 1080 625 1170 650 1250 650 1340 610 1420 600 1440 590 1530 610 1568 650M920 640L915 700 900 760 970 790 1020 820 1060 790 1085 820 1080 900 1000 890 1015 990 960 970 880 960 860 920 830 990 790 1060 800 1090 770 1080 760 1030 720 1020 680 930 640 940 610 1000 580 1070 480 1080 410 1085 380 1030 350 980 355 935 290 935M1085 820L1170 840 1210 790 1290 790 1420 760 1420 800 1480 880 1568 890M410 1085L355 1100 360 1150 420 1200 420 1260 330 1290 340 1330 400 1360 380 1400 400 1568M185 1010L215 980 250 990 230 1015ZM1568 460L1540 480 1550 500M1480 0L1510 80 1568 130"/>
      </g>
      <g filter="url(#wobble-soft)">
        <g class="casing"><use href="#c5-roads"/><use href="#c6-roads"/><use href="#c7-roads"/><use href="#c8-roads"/></g>
        <g class="major"><use href="#c5-roads"/><use href="#c6-roads"/><use href="#c7-roads"/><use href="#c8-roads"/></g>
      </g>
      <g class="dots">
        <path class="town" d="M2236 227h0M2284 386h0M2500 589h0M2268 719h0M2168 773h0M2551.500 835h0M2676 798h0M2661 881h0M3304 329h0M3486 365h0M3163 449h0M2910 502h0M3185 521h0M3268 627h0M3442 663h0M3286 751h0M3016 837h0M3437 839h0M3073 920h0M2591 986h0M2393 1043h0M2749 1076h0M2753 1208h0M2230 1234h0M2400 1248h0M2445 1331h0M2241 1354h0M2841 1341h0M2497 1538h0M3153 1043h0M3390 1048h0M3483 1109h0M2945 1154h0M3217 1142h0M3087 1169h0M3291 1195h0M3073 1309h0M3419 1348h0M3416 1450h0M3395 1507h0M2905 1622h0M3082 1637h0M3322 1671h0M3195 1722h0M3493 1721h0"/>
        <path class="city" d="M2178 460h0M2371 755h0M2828 627h0M3292 449h0M3172 956h0M2822 1548h0M2329 1666h0M3436 1230h0M2942 1489h0M3218 1586h0M3505 1589h0M3526 113h0"/>
      </g>
      <g class="labels">
        <text x="2186" y="186" textLength="103">Newcastle</text><text x="2185" y="215" textLength="103">upon Tyne</text>
        <text x="2262" y="374" textLength="45">York</text><text x="2119" y="484" textLength="119">Manchester</text>
        <text x="2459" y="577" textLength="84">Norwich</text><text x="2235" y="708" textLength="66">Oxford</text>
        <text x="2146" y="762" textLength="45">Bath</text><text x="2520" y="824" textLength="63">Calais</text>
        <text x="2640" y="787" textLength="74">Bruges</text><text x="2641" y="869" textLength="46">Lille</text>
        <text x="3286" y="319" textLength="38">Kiel</text><text x="3448" y="354" textLength="78">Rostock</text>
        <text x="3095" y="438" textLength="138">Bremerhaven</text><text x="2848" y="491" textLength="125">Leeuwarden</text>
        <text x="3144" y="510" textLength="82">Bremen</text><text x="3228" y="616" textLength="82">Hanover</text>
        <text x="3384" y="652" textLength="116">Magdeburg</text><text x="3238" y="740" textLength="97">Göttingen</text>
        <text x="2975" y="827" textLength="82">Cologne</text><text x="3413" y="827" textLength="48">Jena</text>
        <text x="3033" y="911" textLength="81">Koblenz</text><text x="3100" y="1032" textLength="106">Mannheim</text>
        <text x="3331" y="1037" textLength="119">Nuremberg</text><text x="2553" y="975" textLength="77">Amiens</text>
        <text x="2348" y="1068" textLength="89">Le Havre</text><text x="2718" y="1065" textLength="64">Reims</text>
        <text x="2720" y="1198" textLength="68">Troyes</text><text x="2193" y="1223" textLength="75">Rennes</text>
        <text x="2360" y="1238" textLength="83">Le Mans</text><text x="2416" y="1321" textLength="58">Tours</text>
        <text x="2206" y="1343" textLength="71">Nantes</text><text x="2816" y="1330" textLength="52">Dijon</text>
        <text x="2455" y="1527" textLength="86">Limoges</text><text x="2281" y="1654" textLength="98">Bordeaux</text>
        <text x="3422" y="1099" textLength="123">Regensburg</text><text x="2915" y="1143" textLength="62">Nancy</text>
        <text x="3173" y="1131" textLength="90">Stuttgart</text><text x="3030" y="1158" textLength="114">Strasbourg</text>
        <text x="3270" y="1184" textLength="42">Ulm</text><text x="3524" y="1266" textLength="90">Salzburg</text>
        <text x="3045" y="1297" textLength="56">Basel</text><text x="3369" y="1337" textLength="101">Innsbruck</text>
        <text x="3375" y="1440" textLength="82">Bolzano</text><text x="3362" y="1497" textLength="66">Trento</text>
        <text x="3471" y="1578" textLength="67">Venice</text><text x="2858" y="1611" textLength="93">Grenoble</text>
        <text x="3055" y="1626" textLength="53">Turin</text><text x="3288" y="1661" textLength="68">Parma</text>
        <text x="3164" y="1711" textLength="63">Genoa</text><text x="3451" y="1710" textLength="85">Ravenna</text>
        <g class="big">
          <text x="2328" y="785" textLength="87">London</text><text x="2757" y="612" textLength="141">Amsterdam</text>
          <text x="3237" y="479" textLength="112">Hamburg</text><text x="3117" y="986" textLength="113">Frankfurt</text>
          <text x="3393" y="1216" textLength="86">Munich</text><text x="2899" y="1475" textLength="86">Geneva</text>
          <text x="3186" y="1571" textLength="65">Milan</text><text x="2799" y="1535" textLength="46">Lyon</text>
          <text x="3462" y="143" textLength="130">Copenhagen</text>
        </g>
        <g class="state">
          <text x="2752" y="889" textLength="110">Belgium</text><text x="2870" y="677" textLength="48">The</text><text x="2812" y="715" textLength="165">Netherlands</text>
          <text x="2862" y="1013" textLength="151">Luxembourg</text><text x="3052" y="1420" textLength="158">Switzerland</text>
          <text class="sm" x="3173" y="1373" textLength="159">Liechtenstein</text><text class="sm" x="2148" y="1091" textLength="79">Jersey</text>
          <text class="lg" x="2106" y="331" textLength="120">United</text><text class="lg" x="2086" y="381" textLength="160">Kingdom</text>
          <text class="lg" x="3213" y="824" textLength="164">Germany</text><text class="lg" x="2558" y="1286" textLength="126">France</text>
          <text class="nation" x="2254" y="634" textLength="137">ENGLAND</text>
        </g>
        <text class="sea" x="2134" y="992" textLength="40" transform="rotate(-14 2134 992)">nel</text>
      </g>
    </svg>

    <div class="controls">
      <button><svg viewBox="0 0 58 58"><path d="M20 29h18M29 20v18" stroke="#333" stroke-width="5.500" stroke-linecap="round"/></svg></button>
      <button><svg viewBox="0 0 58 58"><path d="M20 29h18" stroke="#333" stroke-width="5.500" stroke-linecap="round"/></svg></button>
      <button><svg viewBox="0 0 58 58"><path d="M21 28l8-15 8 15z" fill="#333"/><path d="M21 31l8 15 8-15z" fill="#ccc"/></svg></button>
    </div>

    <aside class="legend">
      <h4>Code couleur</h4>
      <ul class="colors"><li><i class="dot mine"></i>Vos quêtes</li><li><i class="dot near"></i>Quête la plus proche</li><li><i class="dot open"></i>Quêtes disponibles</li></ul>
      <h4>Environnement</h4>
      <ul class="envs"><li><svg><use href="#i-waves"/></svg>Littoral et rivière</li><li><svg class="w28"><use href="#i-city"/></svg>Environnement urbain</li><li><svg class="w28"><use href="#i-hike"/></svg>Randonnée</li><li><svg class="w28"><use href="#i-sword"/></svg>Autre</li></ul>
    </aside>

    <span class="marker mine m-belgium"><svg><use href="#i-city"/></svg></span>
    <span class="marker near m-tournai"><svg><use href="#i-star"/></svg></span>
    <span class="marker open m-arlon"><svg><use href="#i-city"/></svg></span>
    <div class="here"><svg><use href="#i-home"/></svg>Votre position</div>
    <i class="here-dot"></i>

    <div class="scale">100 km</div>
    <svg class="mapbox" viewBox="0 0 176 46"><g stroke="#4d7f99" stroke-opacity=".75" fill="#fff" fill-opacity=".9" paint-order="stroke"><circle cx="21" cy="23" r="18" stroke-width="4"/><text x="45" y="32" textLength="123" lengthAdjust="spacingAndGlyphs" stroke-width="5">mapbox</text></g><path d="M11 34c-1-8-1-14 3-18 4-5 12-5 16 0 4 4 4 10 0 14-5 4-12 5-19 4z" fill="#5c8ea8"/><path d="M22 15l2 5 5 2-5 2-2 5-2-5-5-2 5-2z" fill="#fff"/></svg>
    <div class="credits"><span>© Mapbox</span><span>© OpenStreetMap</span><b>Improve this map</b></div>
  </section>
</main>
<div class="dock-shade"></div>
<div class="edge"></div>
<div class="corner"></div>
</body>
</html>
```
FILE: styles.css
```css
* { box-sizing: border-box; margin: 0; padding: 0; }
body { width: 3558px; height: 1768px; overflow: hidden; position: relative; display: flex; flex-direction: column; background: #fff; color: #000; font: 400 32px/40px Inter, "Liberation Sans", sans-serif; }
button { font: inherit; border: 0; background: none; color: inherit; display: flex; align-items: center; justify-content: center; white-space: nowrap; }
ul { list-style: none; }
svg { fill: currentColor; flex: none; display: block; }
.sprite { position: absolute; width: 0; height: 0; }
.line { fill: none; stroke: currentColor; stroke-width: 2; stroke-linecap: round; stroke-linejoin: round; }

.topbar { height: 98px; flex: none; background: #e9eeea; display: flex; align-items: center; justify-content: space-between; padding: 0 43px 1px 45px; }
.brand { display: flex; align-items: center; gap: 17px; font-weight: 600; }
.brand-mark { width: 50px; height: 50px; border-radius: 50%; background: #000; color: #fff; font: 800 32px Inter, sans-serif; }
.brand-mark text { stroke: #fff; stroke-width: 1.500; stroke-linejoin: round; }
.nav { display: flex; align-items: center; gap: 20px; letter-spacing: -.0225em; }
.langs { display: flex; gap: 21px; margin-left: 5px; letter-spacing: 0; }
.langs b { font-weight: 600; }
.logout { margin-left: 19px; width: 218px; height: 60px; border-radius: 30px; background: #7d8279; color: #fff; font-size: 26.670px; font-weight: 700; letter-spacing: -.003em; }

.layout { flex: 1; display: flex; min-height: 0; }
.panel { width: 2134px; padding: 49px 24px 0; display: flex; flex-direction: column; align-items: flex-start; }
h1 { font-size: 64px; line-height: 77px; font-weight: 700; letter-spacing: -.0275em; margin-bottom: 22px; white-space: nowrap; }
.filters { display: flex; gap: 20px; }
.pill { height: 92px; border: 2px solid #000; border-radius: 46px; padding: 0 32px; gap: 12px; font-size: 26.670px; font-weight: 600; letter-spacing: .0125em; }
.pill svg { width: 32px; height: 32px; }
.apply { margin-top: 20px; width: 331px; height: 88px; padding-right: 2px; border-radius: 44px; background: #e8774f; color: #fff; gap: 10px; font-size: 26.670px; font-weight: 700; letter-spacing: .007em; }
.apply svg { width: 33px; height: 33px; }
h2 { font-size: 32px; line-height: 40px; font-weight: 600; margin: 24px 0 34px; }

.cards { width: 100%; display: grid; grid-template-columns: 1031px 1031px; gap: 24px; height: 611px; }
.card { display: flex; flex-direction: column; padding: 40px; border-radius: 12px; background: #fff; box-shadow: 0 6px 20px rgba(0, 0, 0, .19), 0 0 6px rgba(0, 0, 0, .08); }
h3 { font-size: 32px; line-height: 40px; font-weight: 600; letter-spacing: -.0064em; }
.chips { flex: 1; display: flex; flex-direction: column; justify-content: flex-end; gap: 16px; }
.chip-row { display: flex; gap: 16px; }
.chip { height: 56px; border-radius: 28px; padding: 0 15px; display: flex; align-items: center; gap: 10px; background: #efefef; color: #333; font-size: 24px; font-weight: 500; letter-spacing: .004em; box-shadow: 0 2px 6px rgba(0, 0, 0, .13); }
.chip svg { width: 34px; height: 34px; }
.chip.nearest { background: #080a70; color: #fff; }
.nearest svg { width: 36px; height: 36px; margin: 0 -1px; }
.place { height: 40px; margin-top: 23px; display: flex; align-items: center; gap: 11px; letter-spacing: -.0215em; }
.place svg { width: 48px; height: 43px; }
.date { margin-top: 20px; font-weight: 600; letter-spacing: .0065em; }
.people { margin-top: 16px; letter-spacing: -.021em; }
.actions { display: flex; gap: 12px; margin-top: 23px; font-size: 28px; }
.details { flex: 1; height: 72px; border: 2px solid #000; border-radius: 8px; font-weight: 600; letter-spacing: .026em; gap: 20px; }
.details svg { width: 32px; height: 32px; }
.join { width: 367px; height: 72px; border-radius: 8px; background: #306332; color: #fff; font-weight: 700; letter-spacing: .0098em; }

.create { margin-top: 24px; width: 566px; height: 124px; padding-top: 1px; display: flex; align-items: center; gap: 25px; border-radius: 4px; background: linear-gradient(to right, transparent 82px, #e9eeea 82px); color: #306332; font-weight: 700; letter-spacing: -.006em; white-space: nowrap; }
.create-icon { width: 124px; height: 124px; border: 12px solid #fff; border-radius: 50%; background: #306332; color: #fff; display: flex; align-items: center; justify-content: center; }
.create-icon svg { width: 62px; height: 62px; }

.map { flex: 1; position: relative; overflow: hidden; }
.canvas { width: 1424px; height: 1670px; }
.canvas path { vector-effect: non-scaling-stroke; }
.relief { mix-blend-mode: multiply; opacity: .5; }
.minor { fill: none; stroke: #fff; stroke-width: 2.300; opacity: .75; }
.lakes { fill: #7cc6e8; }
.region { fill: none; stroke: #aeaeb8; stroke-width: 2.200; }
.country { fill: none; stroke: #83838f; stroke-width: 2.800; }
.casing { fill: none; stroke: #fff; stroke-width: 5.500; stroke-linejoin: round; opacity: .85; }
.major { fill: none; stroke: #ec9a68; stroke-width: 2.100; stroke-linejoin: round; }
.dots { fill: none; stroke: #000; stroke-linecap: round; }
.town { stroke-width: 6.500; }
.city { stroke-width: 9; }
.labels { font-family: Roboto, "Open Sans", sans-serif; font-size: 23px; fill: #30303c; stroke: #fbfaf4; stroke-width: 4; stroke-linejoin: round; paint-order: stroke; }
.labels .big { font-size: 26px; }
.labels .state { fill: #000; font-weight: 500; font-size: 31px; }
.labels .sm { font-size: 27px; }
.labels .lg { font-size: 40px; }
.labels .nation { font-size: 23px; font-weight: 800; }
.labels .sea { fill: #c9ecfb; stroke: none; font-size: 24px; }

.controls { position: absolute; left: 20px; top: 20px; width: 59px; border-radius: 8px; background: #fff; box-shadow: 0 0 0 4px rgba(0, 0, 0, .1); }
.controls button { width: 59px; height: 58px; }
.controls button + button { border-top: 2px solid #ddd; }
.controls svg { width: 58px; height: 58px; }

.legend { position: absolute; right: 21px; top: 20px; width: 849px; height: 195px; padding: 15px 13px; border-radius: 8px; background: #fff; box-shadow: 0 0 0 4px rgba(0, 0, 0, .1); font-size: 24px; line-height: 36px; text-align: right; }
.legend h4 { font-size: 24px; line-height: 36px; font-weight: 600; letter-spacing: .013em; }
.legend ul { display: flex; justify-content: flex-end; }
.legend li { display: flex; align-items: center; white-space: nowrap; }
.colors { gap: 18px; margin: 4px 0 16px; letter-spacing: -.002em; }
.colors li { gap: 6px; }
.dot { width: 20px; height: 20px; border-radius: 50%; }
.mine { background: #e8774f; }
.near { background: #080a70; }
.open { background: #306332; }
.envs { gap: 20px; margin-top: 4px; }
.envs li { gap: 8px; }
.envs svg { width: 22px; height: 22px; }
.envs .w28 { width: 27px; height: 28px; }

.marker { position: absolute; width: 60px; height: 60px; border-radius: 50%; color: #fff; display: flex; align-items: center; justify-content: center; }
.marker svg { width: 40px; height: 40px; }
.m-belgium { left: 614px; top: 722px; }
.m-tournai { left: 528px; top: 758px; }
.m-tournai svg { width: 46px; height: 46px; }
.m-arlon { left: 748px; top: 889px; }
.here { position: absolute; left: 312px; top: 1005px; width: 252px; height: 72px; display: flex; align-items: center; gap: 13px; padding-left: 16px; background: #000; color: #fff; font-size: 24px; font-weight: 700; letter-spacing: .013em; white-space: nowrap; }
.here svg { width: 38px; height: 38px; }
.here-dot { position: absolute; left: 428px; top: 1082px; width: 20px; height: 20px; border-radius: 50%; background: #000; }
.scale { position: absolute; left: 20px; top: 1550px; width: 128px; height: 44px; border: 4px solid #333; border-top: 0; background: rgba(255, 255, 255, .75); color: #333; font-size: 20px; padding-left: 10px; }
.mapbox { position: absolute; left: 14px; top: 1614px; width: 176px; height: 46px; font: 800 33px Lato, Inter, sans-serif; }
.credits { position: absolute; right: 0; bottom: 0; height: 38px; padding: 2px 13px 0 10px; display: flex; align-items: center; gap: 9px; background: rgba(255, 255, 255, .5); color: #333; font-size: 24px; white-space: nowrap; }
.credits span { letter-spacing: -.006em; }
.credits b { font-weight: 700; letter-spacing: .015em; }

.dock-shade { position: absolute; left: 480px; right: 0; bottom: 0; height: 84px; background: linear-gradient(to bottom, rgba(0, 0, 0, 0), rgba(0, 0, 0, .03) 45%, rgba(0, 0, 0, .11)); -webkit-mask-image: linear-gradient(to right, transparent, #000 130px); mask-image: linear-gradient(to right, transparent, #000 130px); }
.edge { position: absolute; right: 0; top: 0; width: 2px; height: 1768px; background: linear-gradient(#b5b5b5 1140px, #6d2626 1140px, #6d2626 1196px, #b5b5b5 1196px); }
.corner { position: absolute; left: 0; bottom: 0; width: 14px; height: 22px; background: radial-gradient(ellipse at 100% 0, transparent 66%, #c9949c 70%); }
```
